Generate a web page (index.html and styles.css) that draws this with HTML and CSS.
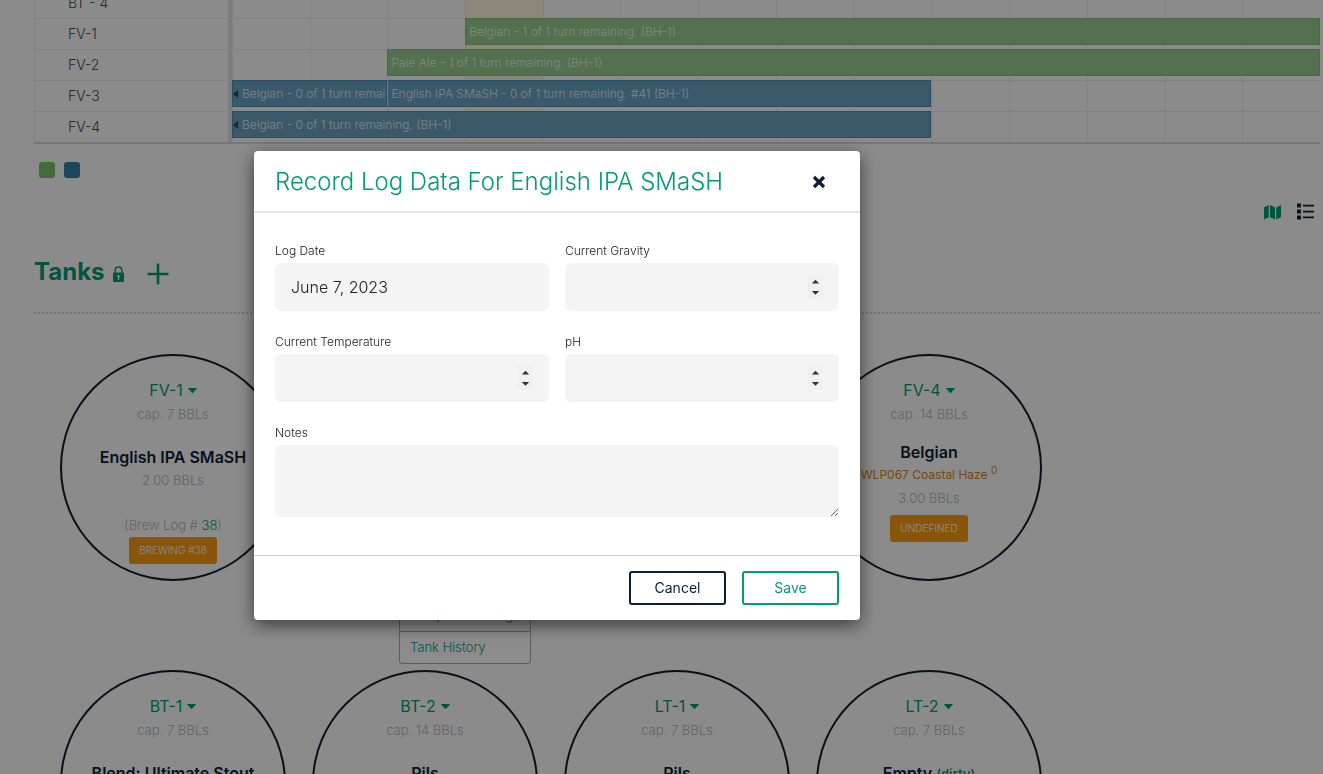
FILE: index.html
```html
<!DOCTYPE html>
<html lang="en">
<head>
<meta charset="utf-8">
<meta name="viewport" content="width=device-width, initial-scale=1">
<title>Tanks</title>
<link rel="stylesheet" href="styles.css">
</head>
<body>
<svg class="sprite" aria-hidden="true">
  <symbol id="caret" viewBox="0 0 9 5"><path d="M0.6 0h7.8q.9 0 .3.8L5 4.7q-.5.5-1 0L.3.8Q-.3 0 .6 0z"/></symbol>
  <symbol id="spin" viewBox="0 0 15 24"><path d="M3.800 8.500L7.500 4.800 11.200 8.500zM3.800 16h7.400L7.500 19.700z"/></symbol>
</svg>

<main class="page">
  <section class="schedule" aria-label="Schedule">
    <div class="row">
      <div class="row-name">BT - 4</div>
      <div class="lane"><span class="today"></span></div>
    </div>
    <div class="row">
      <div class="row-name">FV-1</div>
      <div class="lane"><span class="today"></span><a href="#" class="event planned from-4 to-end">Belgian - 1 of 1 turn remaining. (BH-1)</a></div>
    </div>
    <div class="row">
      <div class="row-name">FV-2</div>
      <div class="lane"><span class="today"></span><a href="#" class="event planned from-3 to-end">Pale Ale - 1 of 1 turn remaining. (BH-1)</a></div>
    </div>
    <div class="row">
      <div class="row-name">FV-3</div>
      <div class="lane"><span class="today"></span><a href="#" class="event active continued from-1 to-3">Belgian - 0 of 1 turn remaining. (BH-1)</a><a href="#" class="event active from-3 to-10">English IPA SMaSH - 0 of 1 turn remaining. #41 (BH-1)</a></div>
    </div>
    <div class="row">
      <div class="row-name">FV-4</div>
      <div class="lane"><span class="today"></span><a href="#" class="event active continued from-1 to-10">Belgian - 0 of 1 turn remaining. (BH-1)</a></div>
    </div>
  </section>

  <div class="legend"><span class="swatch green"></span><span class="swatch blue"></span></div>

  <div class="views">
    <button type="button" class="icon-btn green-icon" aria-label="Map view">
      <svg width="17" height="16" viewBox="0 0 17 16"><path d="M0 3.200L4.800 1v12.300L0 15.400zM6 1l5 2.600v12L6 13.200zM12.200 3.600L17 1v12.200l-4.800 2.300z" fill="currentColor"/></svg>
    </button>
    <button type="button" class="icon-btn" aria-label="List view">
      <svg width="17" height="17" viewBox="0 0 17 17"><path d="M0 .5h4v4H0zM0 6.500h4v4H0zM0 12.500h4v4H0zM6 1.800h11v1.700H6zM6 7.700h11v1.700H6zM6 13.600h11v1.700H6z" fill="currentColor"/></svg>
    </button>
  </div>

  <header class="tanks-head">
    <h2>Tanks</h2>
    <button type="button" class="icon-btn green-icon lock" aria-label="Lock layout">
      <svg width="11" height="16" viewBox="0 0 11 16"><path d="M2.200 7V4.300a3.300 3.300 0 0 1 6.600 0V7" fill="none" stroke="currentColor" stroke-width="1.500"/><path fill-rule="evenodd" d="M1 6.500h9q1 0 1 1V15q0 1-1 1H1q-1 0-1-1V7.500q0-1 1-1zM5.500 8.900a1.300 1.300 0 0 0-.7 2.400V14h1.400v-2.700a1.300 1.300 0 0 0-.7-2.400z" fill="currentColor"/></svg>
    </button>
    <button type="button" class="icon-btn green-icon add" aria-label="Add tank">
      <svg width="22" height="22" viewBox="0 0 22 22"><path d="M11 .5v21M.5 11h21" stroke="currentColor" stroke-width="2.600"/></svg>
    </button>
  </header>

  <section class="tanks">
    <article class="tank">
      <button type="button" class="tank-name">FV-1 <svg class="caret"><use href="#caret"/></svg></button>
      <p class="muted">cap. 7 BBLs</p>
      <h3>English IPA SMaSH</h3>
      <p class="muted">2.00 BBLs</p>
      <p class="muted brew-log">(Brew Log # <a href="#">38</a>)</p>
      <button type="button" class="status">BREWING #38</button>
    </article>
    <article class="tank">
      <div class="menu">
        <a href="#">Temperature Log</a>
        <a href="#">Tank History</a>
      </div>
    </article>
    <article class="tank"></article>
    <article class="tank with-yeast">
      <button type="button" class="tank-name">FV-4 <svg class="caret"><use href="#caret"/></svg></button>
      <p class="muted">cap. 14 BBLs</p>
      <h3>Belgian</h3>
      <a href="#" class="yeast">WLP067 Coastal Haze <sup>0</sup></a>
      <p class="muted">3.00 BBLs</p>
      <button type="button" class="status">UNDEFINED</button>
    </article>
    <article class="tank">
      <button type="button" class="tank-name">BT-1 <svg class="caret"><use href="#caret"/></svg></button>
      <p class="muted">cap. 7 BBLs</p>
      <h3>Blend: Ultimate Stout</h3>
    </article>
    <article class="tank">
      <button type="button" class="tank-name">BT-2 <svg class="caret"><use href="#caret"/></svg></button>
      <p class="muted">cap. 14 BBLs</p>
      <h3>Pils</h3>
    </article>
    <article class="tank">
      <button type="button" class="tank-name">LT-1 <svg class="caret"><use href="#caret"/></svg></button>
      <p class="muted">cap. 7 BBLs</p>
      <h3>Pils</h3>
    </article>
    <article class="tank">
      <button type="button" class="tank-name">LT-2 <svg class="caret"><use href="#caret"/></svg></button>
      <p class="muted">cap. 7 BBLs</p>
      <h3>Empty <a href="#">(dirty)</a></h3>
    </article>
  </section>
</main>

<div class="backdrop">
  <form class="modal" role="dialog" aria-modal="true" aria-labelledby="modal-title">
    <header class="modal-head">
      <h1 id="modal-title">Record Log Data For English IPA SMaSH</h1>
      <button type="button" class="icon-btn close" aria-label="Close">
        <svg width="14" height="14" viewBox="0 0 14 14"><path d="M2 2l10 10M12 2l-10 10" stroke="currentColor" stroke-width="3.200"/></svg>
      </button>
    </header>
    <div class="modal-body">
      <div class="field">
        <label for="log-date">Log Date</label>
        <input id="log-date" type="text" value="June 7, 2023">
      </div>
      <div class="field">
        <label for="gravity">Current Gravity</label>
        <div class="number"><input id="gravity" type="number"><svg class="spin"><use href="#spin"/></svg></div>
      </div>
      <div class="field">
        <label for="temperature">Current Temperature</label>
        <div class="number"><input id="temperature" type="number"><svg class="spin"><use href="#spin"/></svg></div>
      </div>
      <div class="field">
        <label for="ph">pH</label>
        <div class="number"><input id="ph" type="number"><svg class="spin"><use href="#spin"/></svg></div>
      </div>
      <div class="field wide">
        <label for="notes">Notes</label>
        <textarea id="notes"></textarea>
      </div>
    </div>
    <footer class="modal-foot">
      <button type="button" class="btn">Cancel</button>
      <button type="submit" class="btn primary">Save</button>
    </footer>
  </form>
</div>
</body>
</html>
```
FILE: styles.css
```css
:root {
  --green: #009b77;
  --navy: #0a1f33;
  --line: #eaeaea;
}

* { box-sizing: border-box; }

body {
  margin: 0;
  overflow: hidden;
  background: #fefefe;
  color: var(--navy);
  font: 300 13px/20px Inter, "Liberation Sans", sans-serif;
}

h1, h2, h3, p { margin: 0; }
a { color: var(--green); text-decoration: none; }
button, input, textarea { font: inherit; color: inherit; }
.sprite { display: none; }

.icon-btn {
  display: flex;
  padding: 0;
  border: 0;
  background: none;
  color: var(--navy);
}
.green-icon { color: var(--green); }

.page {
  height: 100vh;
  overflow: hidden;
  padding: 0 3px 0 34px;
}

/* Schedule */
.schedule {
  margin-top: -13px;
  border: solid var(--line);
  border-width: 0 0 2px 1px;
  border-bottom-color: #d8d8d8;
}
.row {
  display: grid;
  grid-template-columns: 197px 1fr;
  height: 31px;
  border-top: 1px solid var(--line);
}
.row-name {
  padding-left: 33px;
  border-right: 4px solid #e0e0e0;
  color: #3c4a5c;
  font-size: 14px;
  line-height: 30px;
}
.lane {
  display: grid;
  grid-template-columns: repeat(14, minmax(0, 1fr));
  grid-template-rows: 30px;
  background: linear-gradient(to right, var(--line) 1px, transparent 1px) 0 0 / calc(100% / 14) 100%;
}
.today {
  grid-area: 1 / 4 / 2 / 5;
  background: rgba(250, 215, 60, .15);
}
.event {
  grid-row: 1;
  height: 27px;
  margin-top: -1px;
  padding: 0 3px;
  border: 1px solid;
  overflow: hidden;
  white-space: nowrap;
  color: rgba(255, 255, 255, .85);
  font-size: 12px;
  line-height: 25px;
}
.planned { background: #97cd90; border-color: #86bf7e; }
.active { background: #6aa4c3; border-color: #4b8fb3; }
.event + .event { border-left-color: #e0e0e0; }
.continued::before {
  content: "";
  display: inline-block;
  margin: 0 4px 0 -3px;
  border: solid transparent;
  border-width: 4px 5px 4px 0;
  border-right-color: #27475c;
}
.from-1 { grid-column-start: 1; }
.from-3 { grid-column-start: 3; }
.from-4 { grid-column-start: 4; }
.to-3 { grid-column-end: 3; }
.to-10 { grid-column-end: 10; }
.to-end { grid-column-end: 15; }

.legend {
  display: flex;
  gap: 9px;
  padding: 18px 5px 25px;
}
.swatch { width: 16px; height: 16px; border-radius: 3px; }
.swatch.green { background: #78c46c; }
.swatch.blue { background: #3580aa; }

.views {
  display: flex;
  justify-content: flex-end;
  align-items: center;
  gap: 16px;
  padding-right: 6px;
}

/* Tanks */
.tanks-head {
  display: flex;
  align-items: center;
  gap: 8px;
  padding: 32px 0 20px;
  border-bottom: 2px dotted #d4d4d4;
}
.tanks-head h2 {
  color: var(--green);
  font-size: 24px;
  font-weight: 700;
  line-height: 40px;
}
.tanks-head .lock { margin-top: 4px; }
.tanks-head .add { margin: 4px 0 0 15px; }

.tanks {
  display: grid;
  grid-template-columns: repeat(4, 226px);
  gap: 89px 26px;
  padding: 40px 26px;
}
.tank {
  position: relative;
  display: flex;
  flex-direction: column;
  align-items: center;
  height: 227px;
  padding-top: 22px;
  border: 2px solid var(--navy);
  border-radius: 50%;
  white-space: nowrap;
}
.tank-name {
  display: flex;
  align-items: center;
  gap: 5px;
  padding: 0;
  border: 0;
  background: none;
  color: var(--green);
  font-size: 16px;
  font-weight: 400;
  line-height: 24px;
}
.caret { width: 9px; height: 5px; fill: currentColor; }
.muted { color: #b4b4bc; line-height: 24px; }
.tank h3 {
  margin-top: 20px;
  font-size: 16px;
  font-weight: 600;
  line-height: 22px;
}
.tank h3 a { font-size: 13px; }
.tank.with-yeast h3 { margin-top: 15px; }
.brew-log { margin-top: 21px; }
.yeast { color: #d5840f; font-size: 12px; font-weight: 400; line-height: 24px; }
.yeast sup { font-size: 10px; line-height: 0; }
.status {
  padding: 0 10px;
  border: 0;
  border-radius: 3px;
  background: #fa9c14;
  color: #fff;
  font-size: 10px;
  line-height: 27px;
}
.with-yeast .muted { line-height: 22px; }
.with-yeast .tank-name + .muted { line-height: 24px; }
.with-yeast .status { margin-top: 6px; }

.menu {
  position: absolute;
  top: 243px;
  left: 85px;
  width: 132px;
  border: 1px solid #aaa;
  border-radius: 3px;
  background: #fff;
}
.menu a { display: block; padding: 0 10px; line-height: 31px; }
.menu a + a { border-top: 1px solid #aaa; }

/* Dialog */
.backdrop {
  position: fixed;
  inset: 0;
  padding: 151px 20px 0 254px;
  background: rgba(0, 0, 0, .45);
}
.modal {
  max-width: 606px;
  border-radius: 4px;
  background: #fff;
  box-shadow: 0 5px 18px rgba(0, 0, 0, .6);
}
.modal-head {
  display: flex;
  justify-content: space-between;
  align-items: center;
  padding: 13px 34px 11px 21px;
  border-bottom: 2px solid #e5e5e5;
}
.modal-head h1 {
  color: var(--green);
  font-size: 24px;
  font-weight: 350;
  line-height: 36px;
}
.modal-body {
  display: grid;
  grid-template-columns: 1fr 1fr;
  gap: 21px 16px;
  padding: 28px 21px 38px;
}
.field { display: flex; flex-direction: column; gap: 2px; }
.field label { color: #222; font-size: 12px; }
.wide { grid-column: 1 / -1; }
.field input, .field textarea {
  display: block;
  width: 100%;
  height: 48px;
  padding: 0 16px;
  border: 0;
  border-radius: 6px;
  background: #f4f4f4;
  color: #222;
  font-size: 16px;
}
.field textarea { height: 72px; padding: 12px 16px; }
.number { position: relative; }
.number input { appearance: textfield; padding-right: 32px; }
.number input::-webkit-inner-spin-button { appearance: none; }
.spin {
  position: absolute;
  top: 12px;
  right: 16px;
  width: 15px;
  height: 24px;
  background: #f0f0f0;
  fill: #333;
  pointer-events: none;
}
.modal-foot {
  display: flex;
  justify-content: flex-end;
  gap: 16px;
  padding: 15px 21px;
  border-top: 1px solid #ccc;
}
.btn {
  width: 97px;
  height: 34px;
  padding: 0;
  border: 2px solid var(--navy);
  border-radius: 3px;
  background: #fff;
  font-size: 14px;
  font-weight: 400;
}
.btn.primary { border-color: var(--green); color: var(--green); }
```
